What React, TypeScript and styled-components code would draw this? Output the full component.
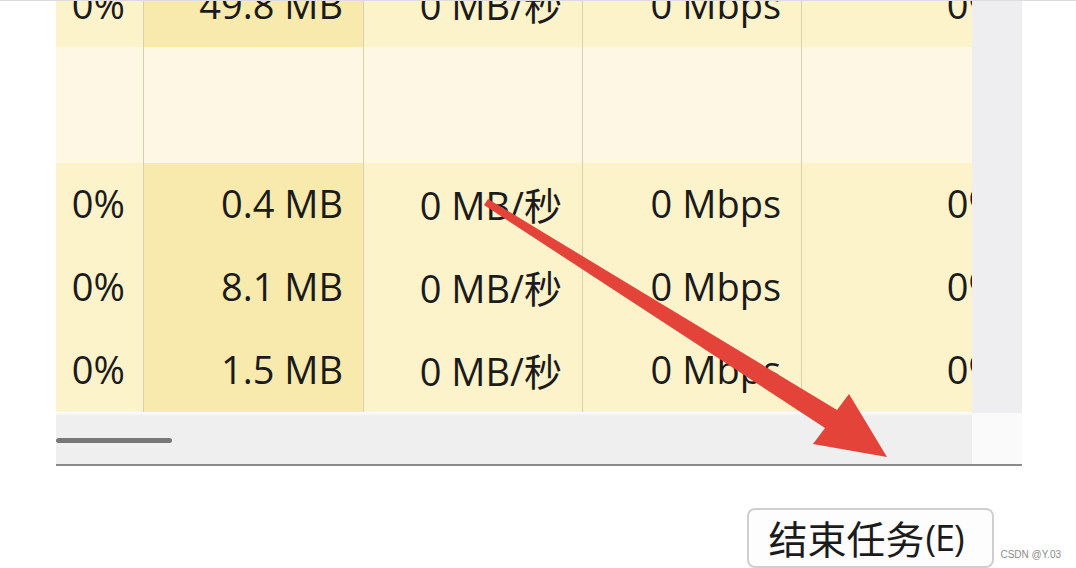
import React from 'react';
import styled, { createGlobalStyle } from 'styled-components';

const GlobalStyle = createGlobalStyle`
  html, body {
    margin: 0;
    padding: 0;
    background: #ffffff;
  }
`;

type Row = {
  cpu: string;
  mem: string;
  disk: string;
  net: string;
  gpu: string;
};

const rows: Row[] = [
  { cpu: '0%', mem: '0.4 MB', disk: '0 MB/秒', net: '0 Mbps', gpu: '0%' },
  { cpu: '0%', mem: '8.1 MB', disk: '0 MB/秒', net: '0 Mbps', gpu: '0%' },
  { cpu: '0%', mem: '1.5 MB', disk: '0 MB/秒', net: '0 Mbps', gpu: '0%' },
];

export default function App() {
  return (
    <>
      <GlobalStyle />
      <Page>
        <ListFrame>
          <Viewport>
            <Rows>
              <DataRow $height={84}>
                <Cell>0%</Cell>
                <Cell $accent>49.8 MB</Cell>
                <Cell>0 MB/秒</Cell>
                <Cell>0 Mbps</Cell>
                <Cell>0%</Cell>
              </DataRow>
              <GroupRow>
                <Cell $group />
                <Cell $group />
                <Cell $group />
                <Cell $group />
                <Cell $group />
              </GroupRow>
              {rows.map((r, i) => (
                <DataRow key={i} $height={83}>
                  <Cell>{r.cpu}</Cell>
                  <Cell $accent>{r.mem}</Cell>
                  <Cell>{r.disk}</Cell>
                  <Cell>{r.net}</Cell>
                  <Cell>{r.gpu}</Cell>
                </DataRow>
              ))}
            </Rows>
          </Viewport>
          <VTrack />
          <HTrack>
            <HThumb />
          </HTrack>
          <Corner />
        </ListFrame>

        <Footer>
          <EndButton type="button">
            结束任务<Mnemonic>(E)</Mnemonic>
          </EndButton>
          <Watermark>CSDN @Y.03</Watermark>
        </Footer>

        <ArrowLayer viewBox="0 0 1076 568" width="1076" height="568">
          <polygon
            points="488,198 837,409 849,393 887,456 813,443 825,427 484,204"
            fill="#e4433a"
          />
        </ArrowLayer>
      </Page>
    </>
  );
}

const Page = styled.div`
  position: relative;
  width: 1076px;
  height: 568px;
  overflow: hidden;
  background: #ffffff;
  border-top: 1px solid #dcdcdc;
  box-sizing: border-box;
  display: flex;
  flex-direction: column;
  font-family: "Open Sans", "Noto Sans", "Noto Sans CJK SC", sans-serif;
  color: #1b1b1b;
`;

const ListFrame = styled.div`
  margin-left: 56px;
  width: 966px;
  display: grid;
  grid-template-columns: 916px 50px;
  grid-template-rows: 412px 51px;
  border-bottom: 2px solid #8a8a8a;
`;

const Viewport = styled.div`
  overflow: hidden;
`;

const Rows = styled.div`
  display: flex;
  flex-direction: column;
  margin-top: -38px;
`;

const DataRow = styled.div<{ $height: number }>`
  display: grid;
  grid-template-columns: 88px 220px 219px 219px 219px;
  height: ${({ $height }) => $height}px;
`;

const GroupRow = styled(DataRow).attrs({ $height: 116 })``;

const Cell = styled.div<{ $accent?: boolean; $group?: boolean }>`
  display: flex;
  align-items: center;
  justify-content: flex-end;
  padding: 0 20px 3px 0;
  white-space: nowrap;
  font-size: 38px;
  background: ${({ $accent, $group }) =>
    $group ? '#fdf7e4' : $accent ? '#f8eaac' : '#fdf3cb'};
  border-right: 1px solid #d9d0b2;

  &:first-child {
    padding-right: 18px;
  }
`;

const VTrack = styled.div`
  background: #eeeef1;
`;

const HTrack = styled.div`
  background: #efefef;
  border-top: 2px solid #f6f6f4;
  display: flex;
  align-items: center;
`;

const HThumb = styled.div`
  width: 116px;
  height: 5px;
  border-radius: 3px;
  background: #787878;
  margin-top: 2px;
`;

const Corner = styled.div`
  background: #fafafa;
`;

const Footer = styled.div`
  display: flex;
  align-items: flex-end;
  justify-content: flex-end;
  padding: 42px 15px 0 0;
  gap: 6px;
`;

const EndButton = styled.button`
  width: 247px;
  height: 60px;
  margin: 0;
  padding: 0 0 2px 19px;
  display: flex;
  align-items: center;
  background: #fdfdfd;
  border: 2px solid #cfcfcf;
  border-radius: 8px;
  font-family: "Noto Sans CJK SC", "Noto Sans", sans-serif;
  font-size: 39px;
  color: #1b1b1b;
`;

const Mnemonic = styled.span`
  font-family: "Open Sans", "Noto Sans", sans-serif;
  font-size: 36px;
  letter-spacing: -1px;
  margin-left: 1px;
`;

const Watermark = styled.span`
  font-family: "Liberation Sans", Arial, sans-serif;
  font-size: 10px;
  color: #8c8c8c;
  padding-bottom: 8px;
`;

const ArrowLayer = styled.svg`
  position: absolute;
  left: 0;
  top: 0;
  pointer-events: none;
`;
